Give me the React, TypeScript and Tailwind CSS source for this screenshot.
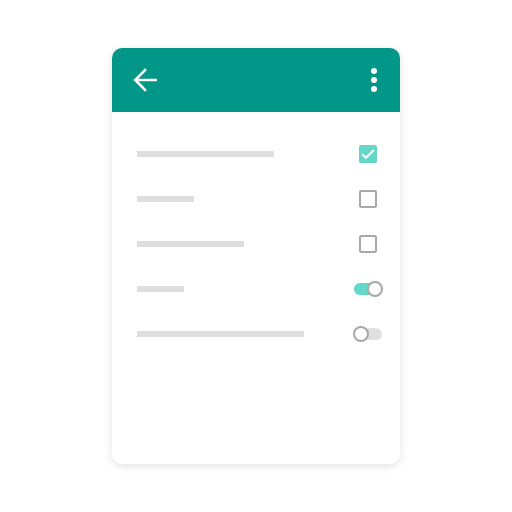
import React from 'react';

type Row = { width: number; control: 'checked' | 'unchecked' | 'on' | 'off' };

const rows: Row[] = [
    { width: 137, control: 'checked' },
    { width: 57, control: 'unchecked' },
    { width: 107, control: 'unchecked' },
    { width: 47, control: 'on' },
    { width: 167, control: 'off' },
];

function Checkbox({ checked }: { checked: boolean }) {
    if (checked) {
        return (
            <div className="w-[18px] h-[18px] rounded-[2px] bg-[#64d8c8]">
                <svg width="18" height="18" viewBox="0 0 18 18" fill="none">
                    <path d="M3.2 9.2 L7 12.8 L14.8 5" stroke="white" strokeWidth="2" />
                </svg>
            </div>
        );
    }
    return <div className="w-[18px] h-[18px] rounded-[2px] border-2 border-[#a8a8a8]" />;
}

function Toggle({ on }: { on: boolean }) {
    return (
        <div className={`relative w-[28px] h-[12px] rounded-full ${on ? 'bg-[#64d8c8]' : 'bg-[#e0e0e0]'}`}>
            <div
                className={`absolute top-[-2px] w-[16px] h-[16px] rounded-full bg-white border-2 border-[#a8a8a8] ${on ? 'right-[-1px]' : 'left-[-1px]'}`}
            />
        </div>
    );
}

export default function App() {
    return (
        <div className="w-[512px] h-[512px] bg-white flex justify-center pt-[48px]">
            <div className="w-[288px] h-[416px] bg-white rounded-[10px] overflow-hidden shadow-[0_2px_8px_rgba(0,0,0,0.12)] flex flex-col">
                {/* Header */}
                <div className="h-[64px] bg-[#009688] flex items-center justify-between pl-[20px] pr-[23px]">
                    <svg width="28" height="28" viewBox="0 0 28 28" fill="none">
                        <path d="M25 14 H3" stroke="white" strokeWidth="2.6" />
                        <path d="M14 3.2 L3.2 14 L14 24.8" stroke="white" strokeWidth="2.6" />
                    </svg>
                    <div className="flex flex-col gap-[3px] items-center w-[6px]">
                        <div className="w-[6px] h-[6px] rounded-full bg-white" />
                        <div className="w-[6px] h-[6px] rounded-full bg-white" />
                        <div className="w-[6px] h-[6px] rounded-full bg-white" />
                    </div>
                </div>

                {/* List */}
                <div className="flex flex-col pt-[19px] pl-[25px] pr-[18px]">
                    {rows.map((row, i) => (
                        <div key={i} className="h-[45px] flex items-center justify-between">
                            <div className="h-[6px] bg-[#dedede]" style={{ width: row.width }} />
                            {row.control === 'checked' && <div className="mr-[5px]"><Checkbox checked /></div>}
                            {row.control === 'unchecked' && <div className="mr-[5px]"><Checkbox checked={false} /></div>}
                            {row.control === 'on' && <Toggle on />}
                            {row.control === 'off' && <Toggle on={false} />}
                        </div>
                    ))}
                </div>
            </div>
        </div>
    );
}
